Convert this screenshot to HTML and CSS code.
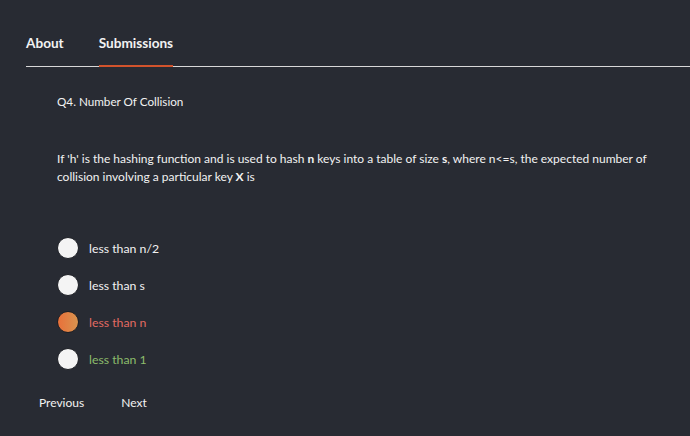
FILE: index.html
```html
<!DOCTYPE html>
<html>
<head>
<meta charset="utf-8">
<link rel="stylesheet" href="styles.css">
</head>
<body>
<div class="page">
  <nav class="tabs">
    <div class="tab">About</div>
    <div class="tab active">Submissions</div>
  </nav>
  <div class="content">
    <h2 class="title">Q4. Number Of Collision</h2>
    <p class="question">If 'h' is the hashing function and is used to hash <b>n</b> keys into a table of size <b>s</b>, where n&lt;=s, the expected number of collision involving a particular key <b>X</b> is</p>
    <ul class="options">
      <li class="option"><span class="radio"></span><span class="label">less than n/2</span></li>
      <li class="option"><span class="radio"></span><span class="label">less than s</span></li>
      <li class="option wrong"><span class="radio"></span><span class="label">less than n</span></li>
      <li class="option right"><span class="radio"></span><span class="label">less than 1</span></li>
    </ul>
  </div>
  <div class="pager">
    <span class="btn">Previous</span>
    <span class="btn">Next</span>
  </div>
</div>
</body>
</html>
```
FILE: styles.css
```css
html, body {
  margin: 0;
  background: #282b33;
}
.page {
  font-family: Lato, "Noto Sans", sans-serif;
  color: #f2f2f2;
  height: 436px;
  padding-top: 34px;
  box-sizing: border-box;
}
.tabs {
  display: flex;
  margin-left: 26px;
  border-bottom: 1px solid #d8d8d8;
  gap: 35px;
}
.tab {
  font-size: 13.6px;
  font-weight: 700;
  line-height: 18px;
  padding-bottom: 13px;
  margin-bottom: -1px;
  border-bottom: 2px solid transparent;
}
.tab.active {
  border-bottom-color: #d2532c;
}
.content {
  padding-left: 57px;
}
.title {
  font-size: 11.7px;
  font-weight: 400;
  margin: 26px 0 0;
  line-height: 16px;
}
.question {
  font-size: 12px;
  line-height: 18px;
  margin: 41px 0 0;
  padding-right: 0;
}
.question b {
  font-weight: 700;
}
.options {
  list-style: none;
  margin: 51px 0 0;
  padding: 0;
  display: flex;
  flex-direction: column;
  gap: 15px;
}
.option {
  display: flex;
  align-items: center;
  gap: 10px;
  font-size: 12.3px;
}
.radio {
  width: 20px;
  height: 20px;
  border-radius: 50%;
  background: #f4f4f4;
  border: 1px solid #1c1e24;
}
.wrong .radio {
  background: linear-gradient(90deg, #e8703a, #d9944f);
}
.wrong .label {
  color: #e26a62;
}
.right .label {
  color: #8cbb6b;
}
.pager {
  display: flex;
  gap: 37px;
  padding-left: 39px;
  margin-top: 25px;
  font-size: 12px;
}
```
